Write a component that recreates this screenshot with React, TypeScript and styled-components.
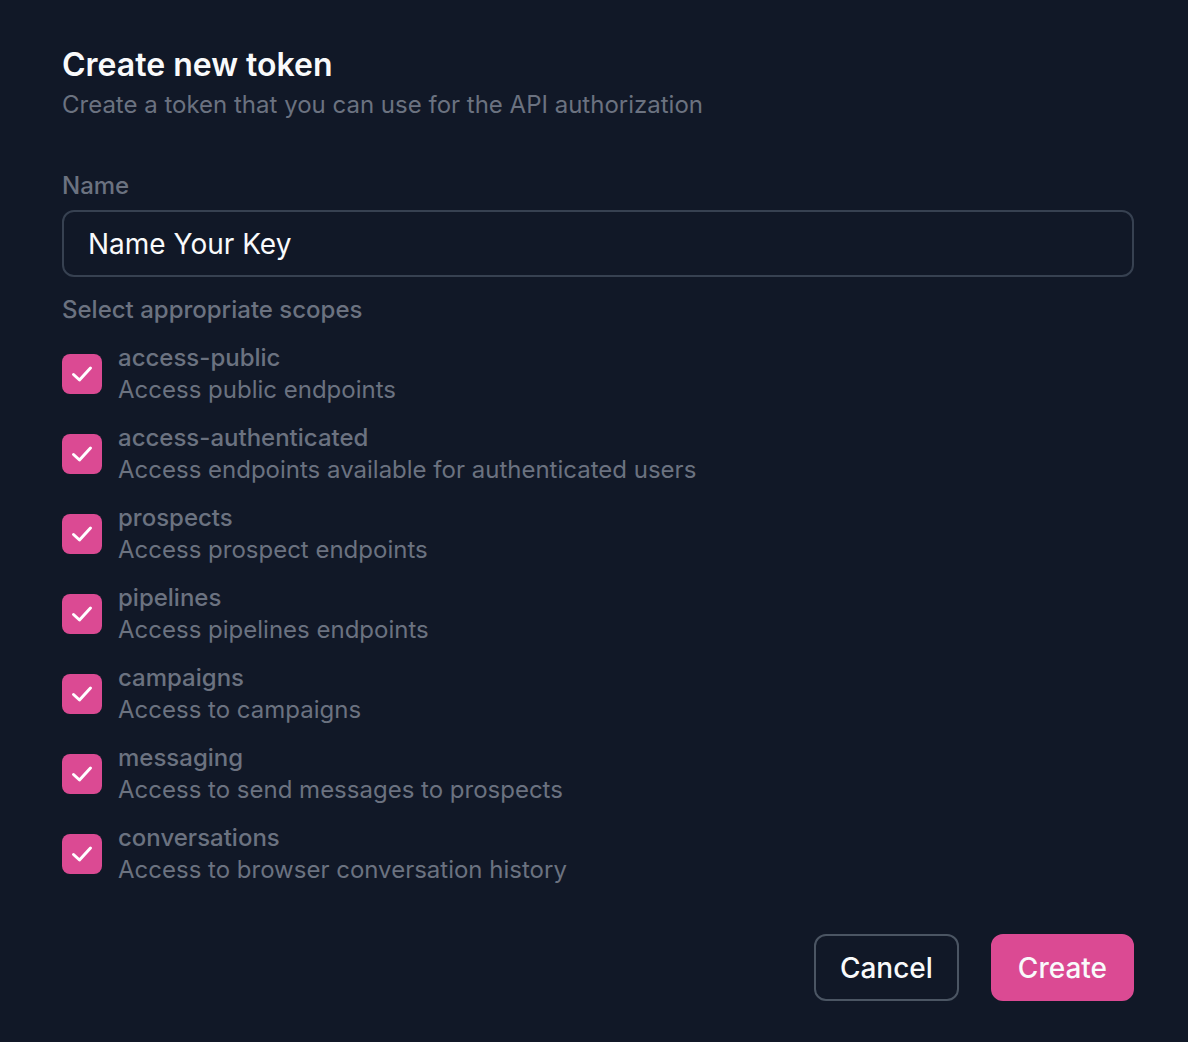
import React from "react";
import styled, { createGlobalStyle } from "styled-components";

const Global = createGlobalStyle`
  html, body { margin: 0; padding: 0; background: #111827; }
  body { font-family: Inter, "Noto Sans", sans-serif; -webkit-font-smoothing: antialiased; }
  * { box-sizing: border-box; }
`;

const Page = styled.div`
  min-height: 1042px;
  background: #111827;
  padding: 47px 54px 0 62px;
  display: flex;
  flex-direction: column;
`;

const Title = styled.h1`
  margin: 0;
  font-size: 32px;
  line-height: 36px;
  font-weight: 600;
  color: #f9fafb;
`;

const Subtitle = styled.p`
  margin: 6px 0 0;
  font-size: 24px;
  line-height: 32px;
  color: #6b7280;
`;

const Label = styled.label<{ $mt: number }>`
  display: block;
  font-size: 24px;
  line-height: 32px;
  font-weight: 500;
  color: #6b7280;
  margin-top: ${(p) => p.$mt}px;
`;

const Input = styled.input`
  margin-top: 8px;
  width: 100%;
  height: 67px;
  border: 2px solid #374151;
  border-radius: 12px;
  background: #111827;
  color: #f9fafb;
  font-family: inherit;
  font-size: 28px;
  padding: 0 24px;
  outline: none;
  &::placeholder { color: #f9fafb; }
`;

const List = styled.div`
  margin-top: 16px;
  display: flex;
  flex-direction: column;
  gap: 16px;
`;

const Row = styled.div`
  display: flex;
  align-items: center;
  gap: 16px;
`;

const Box = styled.div`
  width: 40px;
  height: 40px;
  border-radius: 8px;
  background: #db4a93;
  display: flex;
  align-items: center;
  justify-content: center;
  flex-shrink: 0;
`;

const Texts = styled.div`
  display: flex;
  flex-direction: column;
`;

const ScopeName = styled.span`
  font-size: 24px;
  line-height: 32px;
  font-weight: 500;
  color: #6b7280;
`;

const ScopeDesc = styled.span`
  font-size: 24px;
  line-height: 32px;
  color: #6b7280;
`;

const Actions = styled.div`
  margin-top: 48px;
  display: flex;
  justify-content: flex-end;
  gap: 32px;
`;

const Button = styled.button<{ $primary?: boolean }>`
  height: 67px;
  padding: 0 ${(p) => (p.$primary ? 25 : 24)}px;
  border-radius: 12px;
  font-family: inherit;
  font-size: 28px;
  font-weight: 500;
  color: #f9fafb;
  background: ${(p) => (p.$primary ? "#db4a93" : "#111827")};
  border: 2px solid ${(p) => (p.$primary ? "#db4a93" : "#4b5563")};
  cursor: pointer;
`;

const scopes = [
  ["access-public", "Access public endpoints"],
  ["access-authenticated", "Access endpoints available for authenticated users"],
  ["prospects", "Access prospect endpoints"],
  ["pipelines", "Access pipelines endpoints"],
  ["campaigns", "Access to campaigns"],
  ["messaging", "Access to send messages to prospects"],
  ["conversations", "Access to browser conversation history"],
];

const Check = () => (
  <svg width="40" height="40" viewBox="0 0 40 40" fill="none">
    <path d="M11.5 20.5l6 5.5L28.5 14" stroke="#fff" strokeWidth="3" strokeLinecap="round" strokeLinejoin="round" />
  </svg>
);

export default function App() {
  return (
    <>
      <Global />
      <Page>
        <Title>Create new token</Title>
        <Subtitle>Create a token that you can use for the API authorization</Subtitle>
        <Label $mt={49}>Name</Label>
        <Input placeholder="Name Your Key" />
        <Label $mt={17}>Select appropriate scopes</Label>
        <List>
          {scopes.map(([n, d]) => (
            <Row key={n}>
              <Box>
                <Check />
              </Box>
              <Texts>
                <ScopeName>{n}</ScopeName>
                <ScopeDesc>{d}</ScopeDesc>
              </Texts>
            </Row>
          ))}
        </List>
        <Actions>
          <Button>Cancel</Button>
          <Button $primary>Create</Button>
        </Actions>
      </Page>
    </>
  );
}
